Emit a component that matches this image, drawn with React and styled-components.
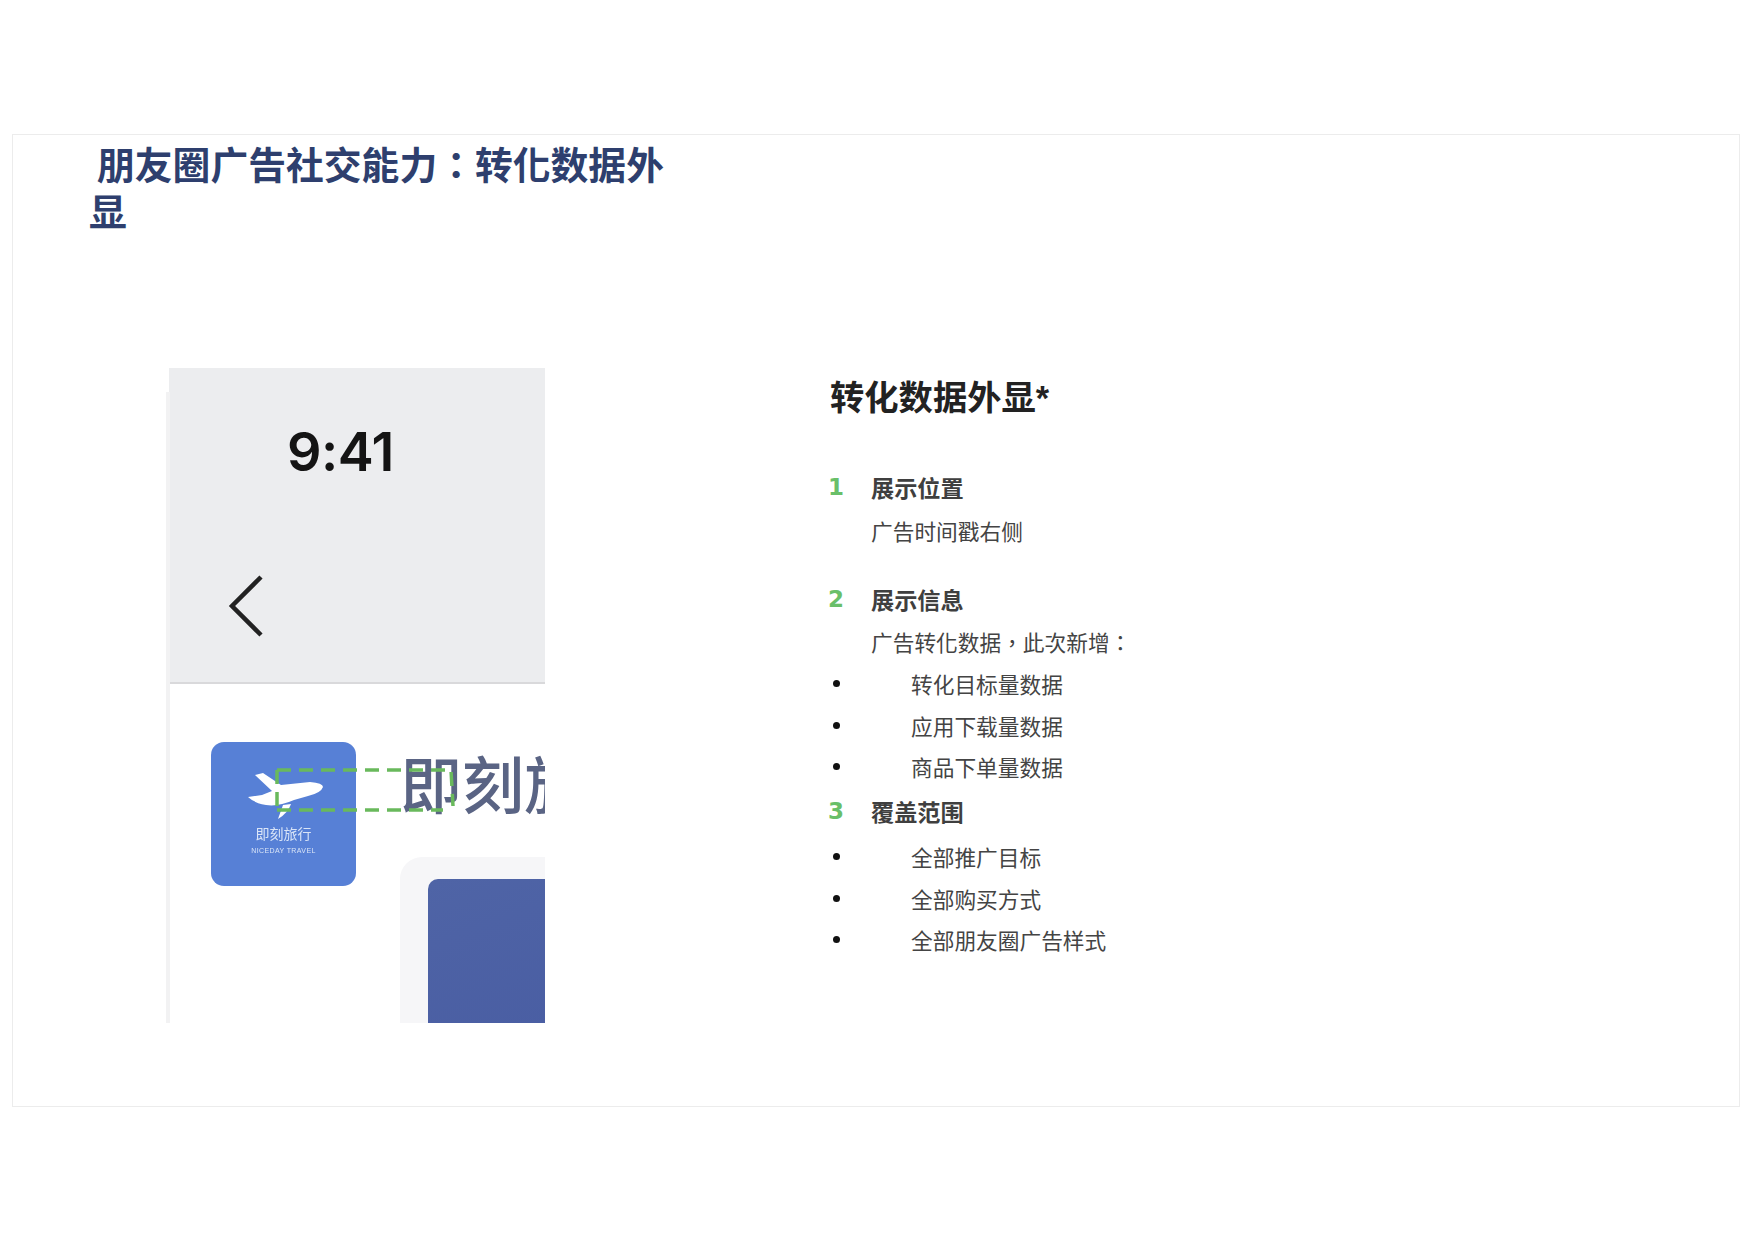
import styled, { createGlobalStyle } from 'styled-components';

const GlobalStyle = createGlobalStyle`
  html, body {
    margin: 0;
    padding: 0;
    background: #fff;
  }
  body {
    font-family: "Liberation Sans", "Noto Sans CJK SC", sans-serif;
  }
`;

const Page = styled.div`
  padding: 134px 14px 0 12px;
`;

const Slide = styled.section`
  height: 973px;
  border: 1px solid #ececec;
  box-sizing: border-box;
`;

// TC face: the reference has centred full-width punctuation
const Title = styled.h1`
  width: 590px;
  margin: 0 0 131px 76px;
  padding-top: 8px;
  font-family: "Liberation Sans", "Noto Sans CJK TC", sans-serif;
  font-size: 37.8px;
  line-height: 47px;
  font-weight: 700;
  color: #2e3f6e;
  text-indent: 8px;
`;

const Content = styled.div`
  display: flex;
  align-items: flex-start;
  padding-left: 153px;
  gap: 285px;
`;

const Shot = styled.div`
  position: relative;
  width: 379px;
  height: 655px;
  padding-left: 3px;
  box-sizing: border-box;
  overflow: hidden;
  background: #fff;
  filter: blur(0.4px);
  &::before {
    content: '';
    position: absolute;
    left: 0;
    top: 24px;
    bottom: 0;
    width: 4px;
    background: #f2f2f3;
  }
`;

const StatusArea = styled.div`
  height: 316px;
  padding: 0 0 0 118px;
  box-sizing: border-box;
  background: #ecedef;
  border-bottom: 2px solid #d9d9db;
`;

const Clock = styled.div`
  padding-top: 50px;
  font-family: "Inter", "Liberation Sans", sans-serif;
  font-size: 54px;
  line-height: 68px;
  font-weight: 600;
  letter-spacing: -0.5px;
  color: #141414;
`;

const BackIcon = styled.svg`
  display: block;
  width: 38px;
  height: 64px;
  margin: 88px 0 0 -60px;
  fill: none;
  stroke: #222;
  stroke-width: 4.5;
`;

const Body = styled.div`
  display: flex;
  gap: 44px;
  padding: 58px 0 0 42px;
`;

const AppIcon = styled.div`
  flex: none;
  display: flex;
  flex-direction: column;
  align-items: center;
  width: 145px;
  height: 144px;
  padding-top: 30px;
  box-sizing: border-box;
  border-radius: 13px;
  background: #5780d6;
  color: #d9e4f7;
`;

const PlaneIcon = styled.svg`
  display: block;
  width: 76px;
  height: 48px;
  margin-left: 4px;
  fill: #fff;
`;

const IconName = styled.div`
  margin-top: 5px;
  font-size: 14px;
  line-height: 18px;
`;

const IconSub = styled.div`
  margin-top: 3px;
  font-size: 7px;
  line-height: 10px;
  letter-spacing: 0.4px;
  white-space: nowrap;
`;

const Main = styled.div`
  min-width: 0;
  overflow: hidden;
`;

const Name = styled.div`
  padding-top: 10px;
  font-size: 62px;
  line-height: 72px;
  font-weight: 500;
  color: #5a6484;
  white-space: nowrap;
`;

const Card = styled.div`
  width: 200px;
  height: 200px;
  margin-top: 33px;
  padding: 22px 0 0 28px;
  box-sizing: border-box;
  border-radius: 22px 0 0 0;
  background: #f6f6f8;
`;

const CardImage = styled.div`
  height: 200px;
  border-radius: 10px 0 0 0;
  background: linear-gradient(160deg, #4f64a6, #485ca2);
`;

const Dashed = styled.svg`
  position: absolute;
  left: 105px;
  top: 400px;
  width: 186px;
  height: 46px;
  fill: none;
  stroke: #69b95c;
  stroke-width: 3.5;
`;

const Notes = styled.div`
  padding-top: 5px;
`;

const NotesTitle = styled.h2`
  margin: 0 0 43px;
  font-size: 34.3px;
  line-height: 50px;
  font-weight: 700;
  color: #222;
`;

const Row = styled.div`
  display: flex;
  align-items: center;
  height: 41.7px;
  margin-top: ${(p) => p.$top || 0}px;
  font-size: 21.7px;
  color: #444;
  white-space: nowrap;
`;

const Num = styled.span`
  width: 43px;
  margin-left: -2px;
  font-family: "DejaVu Sans", sans-serif;
  font-size: 23px;
  font-weight: 700;
  color: #69bf69;
`;

const Heading = styled.span`
  font-size: 23.2px;
  font-weight: 700;
  color: #3f3f3f;
`;

const Sub = styled.span`
  padding-left: 41px;
  font-family: "Liberation Sans", ${(p) => (p.$centred ? '"Noto Sans CJK TC"' : '"Noto Sans CJK SC"')}, sans-serif;
`;

const Bullet = styled.span`
  width: 7px;
  height: 7px;
  margin: 0 71px 0 3px;
  border-radius: 50%;
  background: #111;
`;

const Block = styled.div`
  display: contents;
`;

function Item({ text, top }) {
  return (
    <Row $top={top}>
      <Bullet />
      {text}
    </Row>
  );
}

function App() {
  return (
    <Page>
      <GlobalStyle />
      <Slide>
        <Title>朋友圈广告社交能力：转化数据外显</Title>
        <Content>
          <Shot>
            <StatusArea>
              <Clock>9:41</Clock>
              <BackIcon viewBox="0 0 38 64">
                <path d="M34 3 L5 32 L34 61" />
              </BackIcon>
            </StatusArea>
            <Body>
              <AppIcon>
                <PlaneIcon viewBox="0 0 76 48">
                  <path d="M7 3 L15 1 L33 13 L62 10 Q75 11 75 15 Q73 21 60 24 L46 28 Q30 35 18 33 Q6 31 0 25 L14 23 L24 19 Z" />
                  <path d="M30 47 L35 33 L43 32 Q40 41 30 47 Z" />
                </PlaneIcon>
                <IconName>即刻旅行</IconName>
                <IconSub>NICEDAY TRAVEL</IconSub>
              </AppIcon>
              <Main>
                <Name>即刻旅行</Name>
                <Card>
                  <CardImage />
                </Card>
              </Main>
            </Body>
            <Dashed viewBox="0 0 186 46">
              <path strokeDasharray="14 8" d="M6 2 H180 L182 38 M6 2 V42 M6 42 H172" />
            </Dashed>
          </Shot>
          <Notes>
            <NotesTitle>转化数据外显*</NotesTitle>
            <Row>
              <Num>1</Num>
              <Heading>展示位置</Heading>
            </Row>
            <Row $top={2}>
              <Sub>广告时间戳右侧</Sub>
            </Row>
            <Row $top={27}>
              <Num>2</Num>
              <Heading>展示信息</Heading>
            </Row>
            <Row $top={1}>
              <Sub $centred>广告转化数据，此次新增：</Sub>
            </Row>
            <Block>
              <Item text="转化目标量数据" />
              <Item text="应用下载量数据" />
              <Item text="商品下单量数据" />
            </Block>
            <Row $top={2}>
              <Num>3</Num>
              <Heading>覆盖范围</Heading>
            </Row>
            <Block>
              <Item text="全部推广目标" top={4} />
              <Item text="全部购买方式" />
              <Item text="全部朋友圈广告样式" />
            </Block>
          </Notes>
        </Content>
      </Slide>
    </Page>
  );
}

export default App;
